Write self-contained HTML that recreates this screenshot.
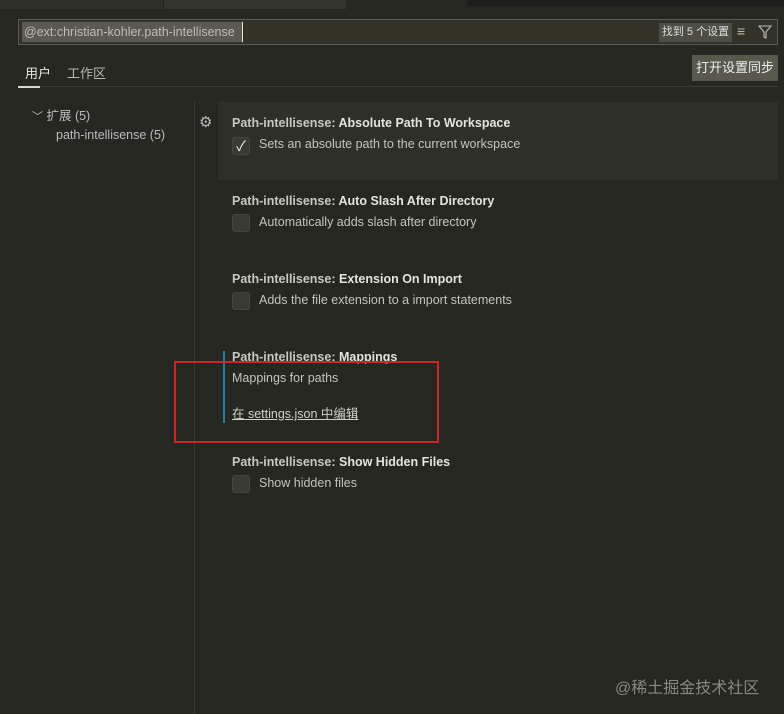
<!DOCTYPE html>
<html><head><meta charset="utf-8"><style>
*{margin:0;padding:0;box-sizing:border-box}
body{width:784px;height:714px;background:#272722;font-family:"Liberation Sans","Noto Sans CJK SC",sans-serif;color:#cfcfc8;position:relative;overflow:hidden;font-size:13px}
.a{position:absolute}
.t{font-size:12.5px;color:#c4c4bc;white-space:nowrap}
.b{font-weight:bold;color:#e4e4de}
.cb{width:18px;height:18px;background:#3a3a35;border-radius:3px;border:1px solid #45453f}
</style></head><body>
<div class="a" style="left:0;top:0;width:163px;height:9px;background:#30302b"></div>
<div class="a" style="left:163px;top:0;width:183px;height:9px;background:#34342e;border-left:1px solid #222"></div>
<div class="a" style="left:467px;top:0;width:317px;height:6px;background:#1e1e1b"></div>
<div class="a" style="left:18px;top:19px;width:760px;height:26px;border:1px solid #5a5a52;background:#323229"></div>
<div class="a t" style="left:22px;top:22px;height:20px;width:221px;background:#5a5a52;color:#bdbdb5;line-height:20px;padding-left:2px;font-size:12.5px;border-right:1px solid #ddd">@ext:christian-kohler.path-intellisense</div>
<div class="a" style="left:659px;top:23px;width:73px;height:19px;background:#4e4e45;color:#ddd;font-size:11px;line-height:19px;text-align:center">找到 5 个设置</div>
<div class="a" style="left:737px;top:23px;color:#bbb;font-size:14px">≡</div>
<svg class="a" style="left:757px;top:24px" width="16" height="16"><path d="M2 2h12l-5 6v6l-2-1V8z" fill="none" stroke="#bbb" stroke-width="1.1"/></svg>
<div class="a" style="left:25px;top:63px;font-size:13px;color:#e8e8e0">用户</div>
<div class="a" style="left:67px;top:63px;font-size:13px;color:#b8b8b0">工作区</div>
<div class="a" style="left:18px;top:86px;width:760px;height:1px;background:#3c3c36"></div>
<div class="a" style="left:18px;top:86px;width:22px;height:2px;background:#d8d8d0"></div>
<div class="a" style="left:692px;top:55px;width:86px;height:26px;background:#58584d;color:#eee;font-size:13px;line-height:26px;text-align:center">打开设置同步</div>
<div class="a t" style="left:32px;top:105px;color:#bbb"><span style="font-size:11px">﹀</span> 扩展 (5)</div>
<div class="a t" style="left:56px;top:128px;color:#bbb">path-intellisense (5)</div>
<div class="a" style="left:194px;top:102px;width:1px;height:612px;background:#3a3a34"></div>
<div class="a" style="left:218px;top:102px;width:560px;height:78px;background:#2f2f29"></div>
<div class="a" style="left:199px;top:113px;color:#bbb;font-size:15px">⚙</div>
<div class="a t" style="left:232px;top:116px"><span style="color:#c8c8c0;font-weight:bold">Path-intellisense: </span><span class="b">Absolute Path To Workspace</span></div>
<div class="a cb" style="left:232px;top:137px;color:#eee;font-size:14px;line-height:16px;text-align:center">✓</div>
<div class="a t" style="left:259px;top:137px">Sets an absolute path to the current workspace</div>
<div class="a t" style="left:232px;top:194px"><span style="color:#c8c8c0;font-weight:bold">Path-intellisense: </span><span class="b">Auto Slash After Directory</span></div>
<div class="a cb" style="left:232px;top:214px"></div>
<div class="a t" style="left:259px;top:215px">Automatically adds slash after directory</div>
<div class="a t" style="left:232px;top:272px"><span style="color:#c8c8c0;font-weight:bold">Path-intellisense: </span><span class="b">Extension On Import</span></div>
<div class="a cb" style="left:232px;top:292px"></div>
<div class="a t" style="left:259px;top:293px">Adds the file extension to a import statements</div>
<div class="a" style="left:223px;top:351px;width:2px;height:72px;background:#1e7fa0"></div>
<div class="a t" style="left:232px;top:350px"><span style="color:#c8c8c0;font-weight:bold">Path-intellisense: </span><span class="b">Mappings</span></div>
<div class="a t" style="left:232px;top:371px">Mappings for paths</div>
<div class="a t" style="left:232px;top:403px;text-decoration:underline;color:#d0d0c8">在 settings.json 中编辑</div>
<div class="a" style="left:174px;top:361px;width:265px;height:82px;border:2px solid #d1232a"></div>
<div class="a t" style="left:232px;top:455px"><span style="color:#c8c8c0;font-weight:bold">Path-intellisense: </span><span class="b">Show Hidden Files</span></div>
<div class="a cb" style="left:232px;top:475px"></div>
<div class="a t" style="left:259px;top:476px">Show hidden files</div>
<div class="a" style="left:615px;top:674px;color:#88887f;font-size:16px">@稀土掘金技术社区</div>
</body></html>
